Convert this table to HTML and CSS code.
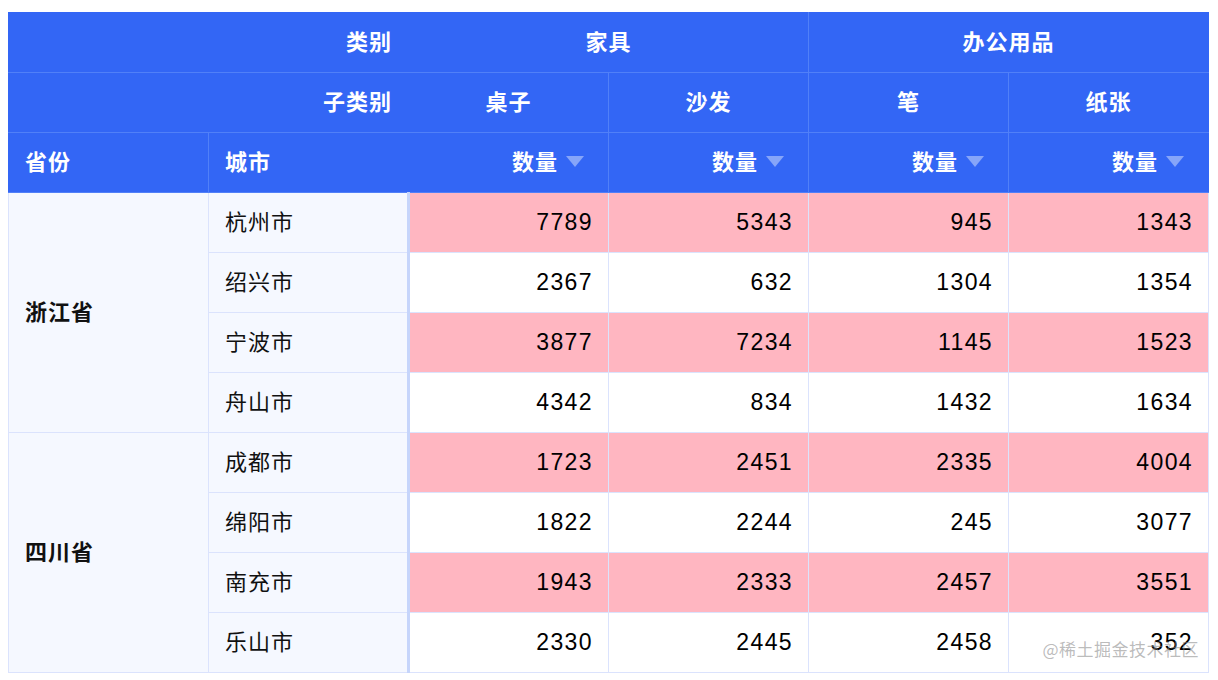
FILE: index.html
```html
<!DOCTYPE html>
<html lang="zh">
<head>
<meta charset="utf-8">
<link rel="stylesheet" href="styles.css">
</head>
<body>
<div class="wrap">
<table class="pivot">
  <colgroup>
    <col class="c"><col class="c"><col class="c"><col class="c"><col class="c"><col class="c">
  </colgroup>
  <thead>
    <tr>
      <th colspan="2" class="corner">类别</th>
      <th colspan="2" class="center">家具</th>
      <th colspan="2" class="center">办公用品</th>
    </tr>
    <tr>
      <th colspan="2" class="corner">子类别</th>
      <th class="center">桌子</th>
      <th class="center">沙发</th>
      <th class="center">笔</th>
      <th class="center">纸张</th>
    </tr>
    <tr>
      <th class="left">省份</th>
      <th class="left city-h">城市</th>
      <th class="measure"><span>数量</span><svg class="tri" width="18" height="11" viewBox="0 0 18 11"><path d="M0 0H18L9 11Z"/></svg></th>
      <th class="measure"><span>数量</span><svg class="tri" width="18" height="11" viewBox="0 0 18 11"><path d="M0 0H18L9 11Z"/></svg></th>
      <th class="measure"><span>数量</span><svg class="tri" width="18" height="11" viewBox="0 0 18 11"><path d="M0 0H18L9 11Z"/></svg></th>
      <th class="measure"><span>数量</span><svg class="tri" width="18" height="11" viewBox="0 0 18 11"><path d="M0 0H18L9 11Z"/></svg></th>
    </tr>
  </thead>
  <tbody>
    <tr class="hl">
      <td rowspan="4" class="prov">浙江省</td>
      <td class="city">杭州市</td><td class="num">7789</td><td class="num">5343</td><td class="num">945</td><td class="num">1343</td>
    </tr>
    <tr>
      <td class="city">绍兴市</td><td class="num">2367</td><td class="num">632</td><td class="num">1304</td><td class="num">1354</td>
    </tr>
    <tr class="hl">
      <td class="city">宁波市</td><td class="num">3877</td><td class="num">7234</td><td class="num">1145</td><td class="num">1523</td>
    </tr>
    <tr>
      <td class="city">舟山市</td><td class="num">4342</td><td class="num">834</td><td class="num">1432</td><td class="num">1634</td>
    </tr>
    <tr class="hl">
      <td rowspan="4" class="prov">四川省</td>
      <td class="city">成都市</td><td class="num">1723</td><td class="num">2451</td><td class="num">2335</td><td class="num">4004</td>
    </tr>
    <tr>
      <td class="city">绵阳市</td><td class="num">1822</td><td class="num">2244</td><td class="num">245</td><td class="num">3077</td>
    </tr>
    <tr class="hl">
      <td class="city">南充市</td><td class="num">1943</td><td class="num">2333</td><td class="num">2457</td><td class="num">3551</td>
    </tr>
    <tr>
      <td class="city">乐山市</td><td class="num">2330</td><td class="num">2445</td><td class="num">2458</td><td class="num">352</td>
    </tr>
  </tbody>
</table>
<div class="watermark">@稀土掘金技术社区</div>
</div>
</body>
</html>
```

FILE: styles.css
```css
html, body {
  background: #ffffff;
}
body {
  margin: 12px 8px;
  font-family: "Liberation Sans", "Noto Sans CJK SC", sans-serif;
}
.wrap {
  position: relative;
  width: 1201px;
}
.pivot {
  border-collapse: collapse;
  table-layout: fixed;
  width: 1201px;
}
.pivot .c {
  width: 200px;
}
.pivot th,
.pivot td {
  box-sizing: border-box;
  height: 60px;
  padding: 0 16px;
  font-size: 22px;
  line-height: 1.2;
  white-space: nowrap;
}
.pivot thead th {
  background: #3366f5;
  color: #ffffff;
  font-family: "Noto Sans CJK SC", sans-serif;
  font-weight: 700;
  border: 1px solid #5180f8;
  letter-spacing: 1px;
  padding-bottom: 5px;
}
.pivot thead tr:first-child th {
  border-top-color: #3366f5;
}
.pivot thead th:first-child {
  border-left-color: #3366f5;
}
.pivot thead th:last-child {
  border-right-color: #3366f5;
}
.pivot thead th.corner {
  text-align: right;
  border-right-color: #3366f5;
}
.pivot thead th.city-h {
  border-right-color: #3366f5;
}
.pivot thead th.center {
  text-align: center;
}
.pivot thead th.left {
  text-align: left;
}
.pivot thead th.measure {
  text-align: right;
  padding-right: 24px;
  padding-bottom: 8px;
}
.measure span {
  vertical-align: middle;
}
.tri {
  display: inline-block;
  vertical-align: middle;
  margin-left: 8px;
  margin-top: 2px;
  fill: #86a5f9;
}
.pivot tbody td {
  border: 1px solid #dbe3fd;
  color: #111111;
}
.pivot tbody td.prov {
  background: #f5f8ff;
  font-family: "Noto Sans CJK SC", sans-serif;
  font-weight: 700;
  letter-spacing: 1px;
  padding-bottom: 5px;
}
.pivot tbody td.city {
  background: #f5f8ff;
  font-family: "Noto Sans CJK SC", sans-serif;
  letter-spacing: 1px;
  border-right: 3px solid #c6d5fb;
  padding-bottom: 5px;
}
.pivot tbody td.num {
  text-align: right;
  background: #ffffff;
  font-size: 23px;
  letter-spacing: 1.4px;
  padding-right: 15px;
  color: #000000;
}
.pivot tbody tr.hl td.num {
  background: #ffb6c1;
}
.watermark {
  position: absolute;
  right: 10px;
  bottom: 14px;
  font-family: "Noto Sans CJK SC", sans-serif;
  font-size: 17px;
  line-height: 1.2;
  color: rgba(130, 130, 130, 0.55);
  letter-spacing: 0.5px;
  pointer-events: none;
}
```
